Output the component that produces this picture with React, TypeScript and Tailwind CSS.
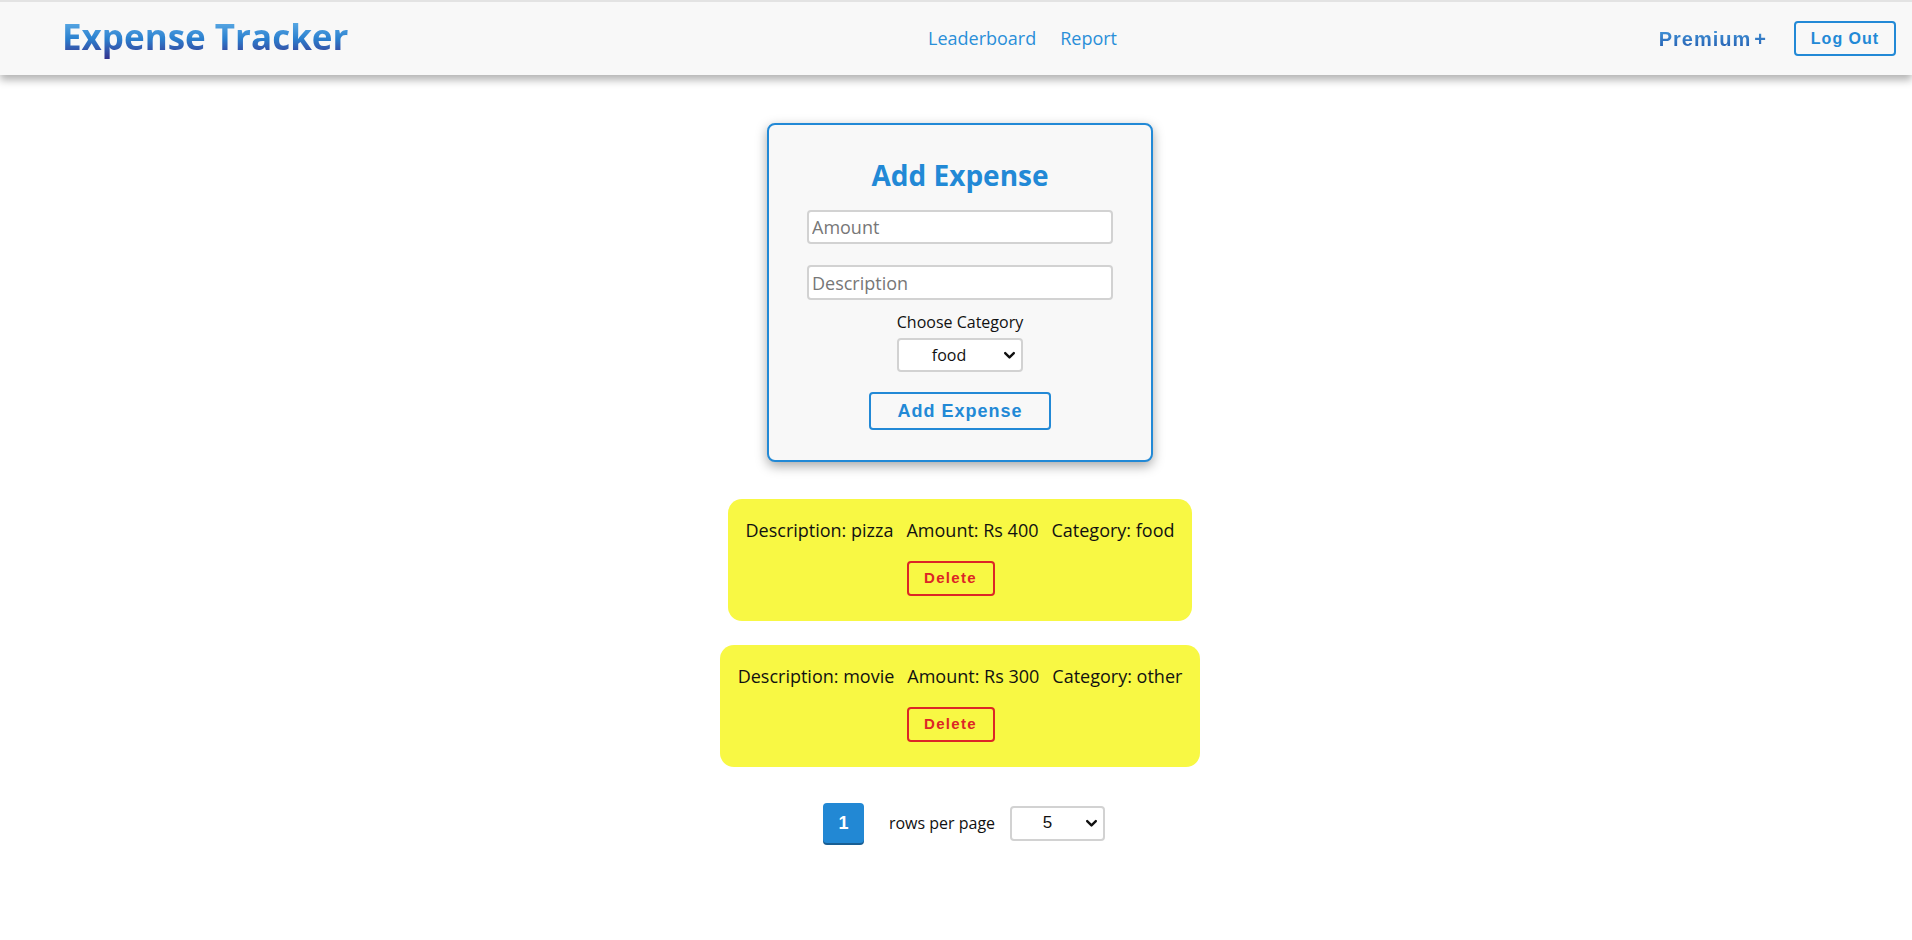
import { useState } from "react";

const expenses = [
  { id: 1, description: "pizza", amount: 400, category: "food" },
  { id: 2, description: "movie", amount: 300, category: "other" },
];

function Chevron() {
  return (
    <svg
      viewBox="0 0 12 12"
      className="pointer-events-none absolute right-[7px] top-1/2 h-[13px] w-[13px] -translate-y-1/2"
      fill="none"
      stroke="#111"
      strokeWidth="2.2"
      strokeLinecap="round"
      strokeLinejoin="round"
    >
      <path d="M2 4.2 6 8.2l4-4" />
    </svg>
  );
}

export default function App() {
  const [category, setCategory] = useState("food");
  const [rows, setRows] = useState("5");

  return (
    <div className="min-h-screen bg-white font-['Open_Sans',sans-serif] text-[#111]">
      {/* Navbar */}
      <header className="flex h-[75px] items-center border-t-2 border-[#e3e3e3] bg-[#f8f8f8] pl-[62px] pr-[16px] shadow-[0_5px_8px_rgba(0,0,0,0.3)]">
        <div className="w-[866px]">
          <h1 className="inline-block bg-linear-to-b from-[#6cbaec] via-[#2a80cf] to-[#2f1f80] bg-clip-text pb-[4px] text-[35px] leading-[44px] font-bold text-transparent">
            Expense Tracker
          </h1>
        </div>
        <nav className="flex items-center gap-[24px] text-[18px] text-[#2a8fd8]">
          <a href="#leaderboard">Leaderboard</a>
          <a href="#report">Report</a>
        </nav>
        <div className="ml-auto flex items-center gap-[27px]">
          <span className="bg-linear-to-b from-[#4ea6e4] to-[#1e4fa6] bg-clip-text font-['Liberation_Sans',sans-serif] text-[20px] font-bold tracking-[1px] text-transparent">
            Premium<span className="ml-[3px]">+</span>
          </span>
          <button className="h-[35px] w-[102px] rounded-[4px] border-2 border-[#2289d6] font-['Liberation_Sans',sans-serif] text-[16px] font-bold tracking-[1px] text-[#2289d6]">
            Log Out
          </button>
        </div>
      </header>

      <main className="flex flex-col items-center pl-[8px]">
        {/* Add expense form */}
        <form
          className="mt-[48px] flex w-[386px] flex-col items-center rounded-[8px] border-2 border-[#2289d6] bg-[#f8f8f8] pt-[32px] pb-[30px] shadow-[0_4px_12px_rgba(0,0,0,0.35)]"
          onSubmit={(e) => e.preventDefault()}
        >
          <h2 className="text-[28px] leading-[36px] font-bold text-[#2289d6]">Add Expense</h2>
          <input
            type="number"
            placeholder="Amount"
            className="mt-[17px] h-[34px] w-[306px] rounded-[4px] border-2 border-[#d2d2d2] bg-white px-[3px] text-[18px] outline-none placeholder:text-[#777]"
          />
          <input
            type="text"
            placeholder="Description"
            className="mt-[21px] h-[35px] w-[306px] rounded-[4px] border-2 border-[#d2d2d2] bg-white px-[3px] text-[18px] outline-none placeholder:text-[#777]"
          />
          <label className="mt-[12px] text-[16px] leading-[20px]">Choose Category</label>
          <div className="relative mt-[6px]">
            <select
              value={category}
              onChange={(e) => setCategory(e.target.value)}
              className="h-[34px] w-[126px] appearance-none rounded-[4px] border-2 border-[#d2d2d2] bg-white pr-[22px] text-center text-[16px] outline-none"
            >
              <option value="food">food</option>
              <option value="petrol">petrol</option>
              <option value="salary">salary</option>
              <option value="other">other</option>
            </select>
            <Chevron />
          </div>
          <button
            type="submit"
            className="mt-[20px] h-[38px] w-[182px] rounded-[4px] border-2 border-[#2289d6] font-['Liberation_Sans',sans-serif] text-[18px] font-bold tracking-[1px] text-[#2289d6]"
          >
            Add Expense
          </button>
        </form>

        {/* Expense list */}
        <ul className="mt-[37px] flex flex-col items-center gap-[24px]">
          {expenses.map((exp) => (
            <li
              key={exp.id}
              className="flex flex-col items-center rounded-[14px] bg-[#f8f844] px-[18px] pt-[19px] pb-[25px]"
            >
              <div className="flex gap-[13px] text-[18px] leading-[24px]">
                <span>Description: {exp.description}</span>
                <span>Amount: Rs {exp.amount}</span>
                <span>Category: {exp.category}</span>
              </div>
              <button className="mt-[19px] mr-[19px] h-[35px] w-[88px] rounded-[4px] border-2 border-[#dc2626] font-['Liberation_Sans',sans-serif] text-[15px] font-bold tracking-[1.3px] text-[#dc2626]">
                Delete
              </button>
            </li>
          ))}
        </ul>

        {/* Pagination */}
        <div className="mt-[36px] ml-[8px] flex items-center">
          <button className="h-[40px] w-[41px] rounded-[4px] bg-[#2288d4] font-['Liberation_Sans',sans-serif] text-[18px] font-bold text-white shadow-[0_2px_0_#185e94]">
            1
          </button>
          <span className="ml-[25px] text-[16px]">rows per page</span>
          <div className="relative ml-[15px]">
            <select
              value={rows}
              onChange={(e) => setRows(e.target.value)}
              className="h-[35px] w-[95px] appearance-none rounded-[4px] border-2 border-[#d2d2d2] bg-white pr-[20px] text-center font-['Liberation_Sans',sans-serif] text-[17px] outline-none"
            >
              <option value="5">5</option>
              <option value="10">10</option>
              <option value="20">20</option>
            </select>
            <Chevron />
          </div>
        </div>
      </main>
    </div>
  );
}
